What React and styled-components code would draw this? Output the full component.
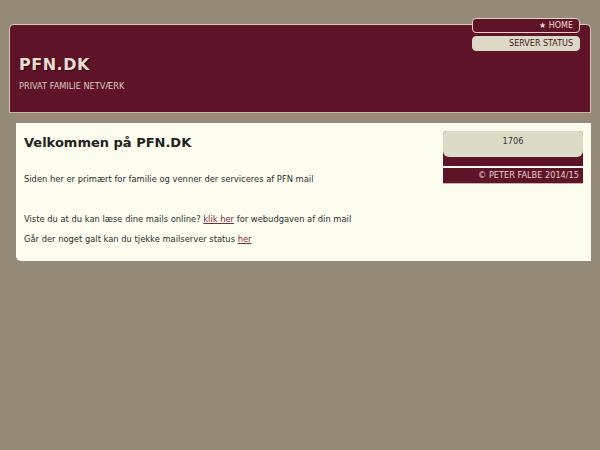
import styled, { createGlobalStyle } from 'styled-components'

const GlobalStyle = createGlobalStyle`
  html, body {
    margin: 0;
    padding: 0;
    background: #968b79;
    font-family: "DejaVu Sans", Verdana, sans-serif;
  }
`

const Page = styled.div`
  padding: 24px 9px 20px 9px;
`

const Header = styled.header`
  position: relative;
  background: #5f1329;
  border: 1px solid #d9c6b3;
  border-bottom-color: #cfb7a6;
  border-radius: 5px 5px 0 0;
  padding: 30px 0 0 9px;
  box-sizing: border-box;
  height: 89px;
`

const Logo = styled.h1`
  margin: 0;
  font-size: 16px;
  font-weight: bold;
  color: #e9dfcf;
  letter-spacing: 0.5px;
  text-shadow: 1px 1px 1px #2a0610;
`

const Tagline = styled.div`
  margin-top: 7px;
  font-size: 8.2px;
  color: #dccbc0;
`

const Nav = styled.nav`
  position: absolute;
  top: -7px;
  right: 10px;
  width: 108px;
  display: flex;
  flex-direction: column;
  gap: 3px;
`

const NavItem = styled.a`
  display: block;
  text-align: right;
  font-size: 8px;
  line-height: 13px;
  padding: 0 6px;
  border-radius: 4px;
  text-decoration: none;
  background: ${p => (p.$active ? '#5f1329' : '#dcdac6')};
  color: ${p => (p.$active ? '#eadfd2' : '#4b1221')};
  border: 1px solid ${p => (p.$active ? '#e3d2c4' : '#dcdac6')};
`

const Content = styled.main`
  margin: 10px 0 0 7px;
  background: #fdfdef;
  border-radius: 0 0 0 5px;
  padding: 8px;
  display: flex;
  gap: 12px;
  height: 122px;
`

const Main = styled.div`
  flex: 1;
`

const Title = styled.h2`
  margin: 4px 0 24px 0;
  font-size: 13px;
  font-weight: bold;
  color: #222;
`

const Text = styled.p`
  margin: 0 0 ${p => p.$gap || 10}px 0;
  font-size: 8.35px;
  line-height: 10px;
  color: #2e2e2e;
`

const Link = styled.a`
  color: #7d2c3c;
  text-decoration: underline;
`

const Sidebar = styled.aside`
  width: 140px;
  display: flex;
  flex-direction: column;
`

const Counter = styled.div`
  background: #5f1329;
  border-radius: 4px 4px 0 0;
  padding-bottom: 9px;
`

const CounterValue = styled.div`
  background: #dcdbc6;
  border-radius: 4px 4px 6px 6px;
  height: 26px;
  box-sizing: border-box;
  padding-top: 5px;
  text-align: center;
  font-size: 8.2px;
  color: #333;
`

const Copyright = styled.div`
  margin-top: 2px;
  background: #5f1329;
  color: #e1d3c8;
  font-size: 8.2px;
  line-height: 15px;
  text-align: right;
  padding: 0 4px;
  border-bottom: 1px solid #c9b2a5;
`

export default function App() {
  return (
    <>
      <GlobalStyle />
      <Page>
        <Header>
          <Logo>PFN.DK</Logo>
          <Tagline>PRIVAT FAMILIE NETVÆRK</Tagline>
          <Nav>
            <NavItem $active href="#">★ HOME</NavItem>
            <NavItem href="#">SERVER STATUS</NavItem>
          </Nav>
        </Header>
        <Content>
          <Main>
            <Title>Velkommen på PFN.DK</Title>
            <Text $gap={30}>Siden her er primært for familie og venner der serviceres af PFN mail</Text>
            <Text>
              Viste du at du kan læse dine mails online? <Link href="#">klik her</Link> for webudgaven af din mail
            </Text>
            <Text>
              Går der noget galt kan du tjekke mailserver status <Link href="#">her</Link>
            </Text>
          </Main>
          <Sidebar>
            <Counter>
              <CounterValue>1706</CounterValue>
            </Counter>
            <Copyright>© PETER FALBE 2014/15</Copyright>
          </Sidebar>
        </Content>
      </Page>
    </>
  )
}
